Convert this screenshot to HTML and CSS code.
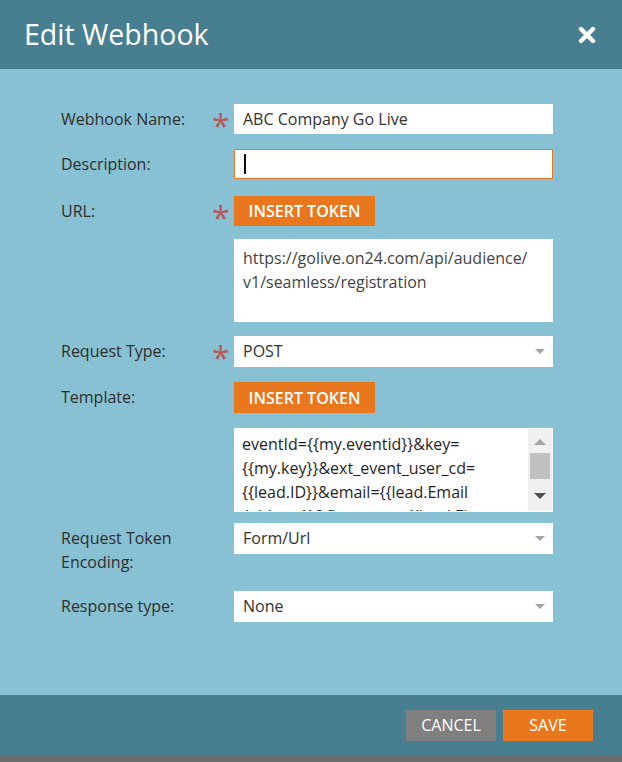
FILE: index.html
```html
<!DOCTYPE html>
<html lang="en">
<head>
    <meta charset="UTF-8">
    <title>Edit Webhook</title>
    <link rel="stylesheet" href="styles.css">
</head>
<body>
    <div class="dialog">
        <div class="dialog-header">
            <h1>Edit Webhook</h1>
            <button class="close" aria-label="Close">
                <svg width="18" height="18" viewBox="0 0 18 18">
                    <path d="M3 3 L15 15 M15 3 L3 15" stroke="#fff" stroke-width="4.4" stroke-linecap="round"/>
                </svg>
            </button>
        </div>

        <div class="dialog-body">
            <div class="row">
                <label class="label">Webhook Name:</label>
                <span class="req">*</span>
                <div class="input">ABC Company Go Live</div>
            </div>

            <div class="row">
                <label class="label">Description:</label>
                <span></span>
                <div class="input focused"><span class="caret"></span></div>
            </div>

            <div class="row gap-17">
                <label class="label">URL:</label>
                <span class="req">*</span>
                <div><button class="token-btn">INSERT TOKEN</button></div>
            </div>

            <div class="row gap-13">
                <span></span>
                <span></span>
                <div class="area url-area">https://golive.on24.com/api/audience/<br>v1/seamless/registration</div>
            </div>

            <div class="row gap-14">
                <label class="label">Request Type:</label>
                <span class="req">*</span>
                <div class="select">POST<span class="arrow"></span></div>
            </div>

            <div class="row">
                <label class="label">Template:</label>
                <span></span>
                <div><button class="token-btn tall">INSERT TOKEN</button></div>
            </div>

            <div class="row">
                <span></span>
                <span></span>
                <div class="area template-area">
                    <div class="template-text">eventId={{my.eventid}}&amp;key=<br>{{my.key}}&amp;ext_event_user_cd=<br>{{lead.ID}}&amp;email={{lead.Email<br>Address}}&amp;firstname={{lead.First</div>
                    <div class="scrollbar">
                        <span class="sb-up"></span>
                        <span class="sb-thumb"></span>
                        <span class="sb-down"></span>
                    </div>
                </div>
            </div>

            <div class="row gap-11">
                <label class="label">Request Token Encoding:</label>
                <span></span>
                <div class="select">Form/Url<span class="arrow"></span></div>
            </div>

            <div class="row gap-17">
                <label class="label">Response type:</label>
                <span></span>
                <div class="select">None<span class="arrow"></span></div>
            </div>
        </div>

        <div class="dialog-footer">
            <button class="btn cancel">CANCEL</button>
            <button class="btn save">SAVE</button>
        </div>
    </div>
</body>
</html>
```

FILE: styles.css
```css
body {
    margin: 0;
    background: #6d6d6d;
    font-family: "Open Sans", "Liberation Sans", sans-serif;
    color: #333;
}

.dialog {
    width: 622px;
    height: 755px;
    display: flex;
    flex-direction: column;
    background: #88c1d3;
}

.dialog-header {
    height: 69px;
    background: #477f90;
    display: flex;
    align-items: center;
    justify-content: space-between;
    padding: 0 26px 0 24px;
    box-sizing: border-box;
}

.dialog-header h1 {
    margin: 0;
    font-size: 28.5px;
    font-weight: normal;
    color: #fff;
    padding-bottom: 2px;
}

.close {
    background: none;
    border: none;
    padding: 0;
    display: flex;
}

.dialog-body {
    flex: 1;
    padding: 35px 0 0 61px;
}

.row {
    display: grid;
    grid-template-columns: 144px 29px 319px;
    align-items: start;
}

.row + .row {
    margin-top: 15px;
}

.row.gap-11 {
    margin-top: 11px;
}

.row.gap-13 {
    margin-top: 13px;
}

.row.gap-14 {
    margin-top: 14px;
}

.row.gap-17 {
    margin-top: 17px;
}

.label {
    font-size: 16px;
    line-height: 24px;
    padding-top: 3px;
    color: #2e2e2e;
}

.req {
    color: #b9585a;
    font-size: 32px;
    line-height: 24px;
    height: 30px;
    box-sizing: border-box;
    padding: 10px 0 0 7px;
}

.input,
.select {
    height: 30px;
    background: #fff;
    box-sizing: border-box;
    padding: 0 9px;
    font-size: 16px;
    line-height: 30px;
    color: #333;
    position: relative;
}

.select {
    height: 31px;
    line-height: 31px;
}

.input.focused {
    border: 1px solid #e87722;
    line-height: 28px;
    padding: 0 9px;
    display: flex;
    align-items: center;
}

.caret {
    width: 2px;
    height: 20px;
    background: #111;
}

.arrow {
    position: absolute;
    right: 8px;
    top: 13px;
    border-left: 5px solid transparent;
    border-right: 5px solid transparent;
    border-top: 5px solid #a5a5a5;
}

.token-btn {
    height: 30px;
    width: 141px;
    background: #e8771d;
    border: none;
    color: #fff;
    font-family: inherit;
    font-size: 16px;
    font-weight: 600;
    padding: 0;
    display: block;
}

.token-btn.tall {
    height: 31px;
}

.area {
    background: #fff;
    font-size: 16px;
    line-height: 24px;
    box-sizing: border-box;
}

.url-area {
    height: 83px;
    padding: 7px 9px;
    color: #444;
}

.template-area {
    height: 84px;
    display: flex;
    border: 1px solid #fbfbfb;
    border-left: none;
    overflow: hidden;
}

.template-text {
    flex: 1;
    padding: 3px 0 0 8px;
    color: #1f1f1f;
    white-space: nowrap;
    overflow: hidden;
}

.scrollbar {
    width: 24px;
    background: #f0f0f0;
    position: relative;
}

.sb-up,
.sb-down {
    position: absolute;
    left: 6px;
    border-left: 6px solid transparent;
    border-right: 6px solid transparent;
}

.sb-up {
    top: 10px;
    border-bottom: 6px solid #a3a3a3;
}

.sb-down {
    bottom: 12px;
    border-top: 6px solid #505050;
}

.sb-thumb {
    position: absolute;
    left: 2px;
    right: 2px;
    top: 24px;
    height: 26px;
    background: #c1c1c1;
}

.dialog-footer {
    height: 60px;
    background: #477f90;
    display: flex;
    justify-content: flex-end;
    align-items: center;
    gap: 7px;
    padding-right: 29px;
}

.btn {
    width: 90px;
    height: 31px;
    border: none;
    color: #fff;
    font-family: inherit;
    font-size: 16px;
    padding: 0;
}

.cancel {
    background: #7f7f7f;
}

.save {
    background: #e8771d;
}
```
